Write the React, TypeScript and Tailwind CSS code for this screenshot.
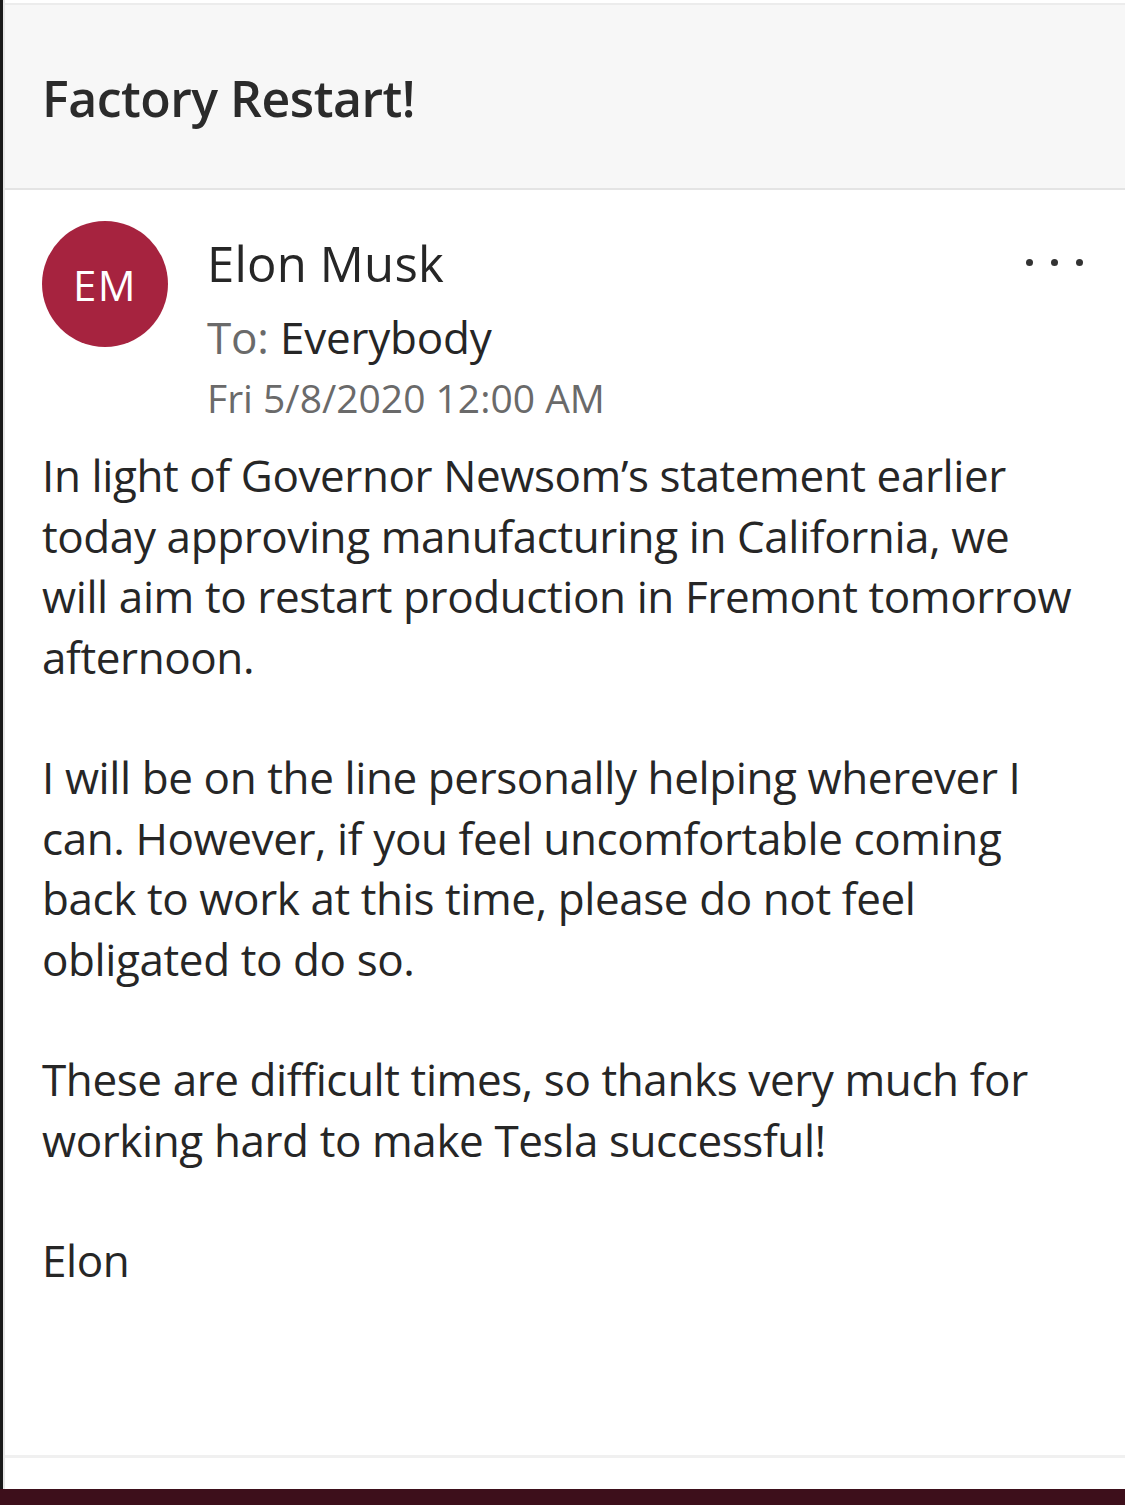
const body: string[][] = [
  [
    'In light of Governor Newsom\u2019s statement earlier',
    'today approving manufacturing in California, we',
    'will aim to restart production in Fremont tomorrow',
    'afternoon.',
  ],
  [
    'I will be on the line personally helping wherever I',
    'can. However, if you feel uncomfortable coming',
    'back to work at this time, please do not feel',
    'obligated to do so.',
  ],
  [
    'These are difficult times, so thanks very much for',
    'working hard to make Tesla successful!',
  ],
  ['Elon'],
];

export default function App() {
  return (
    <div className="flex h-[1505px] w-[1125px] flex-col overflow-hidden bg-white font-['Open_Sans',sans-serif] text-[#262626]">
      <div className="flex flex-1 flex-col border-l-[3px] border-[#1a1a1a]">
        <div className="flex flex-1 flex-col border-l-2 border-[#e6e6e6] pt-[3px]">
          <header className="flex h-[187px] items-center border-y-2 border-t-[#ececec] border-b-[#e4e4e4] bg-[#f7f7f7] pl-[37px]">
            <h1 className="pt-[4px] text-[50px] font-semibold tracking-[-0.5px] text-[#2b2b2b]">Factory Restart!</h1>
          </header>

          <div className="flex flex-1 flex-col border-b-[3px] border-[#f0f0f0] pl-[37px] pr-[40px]">
            <div className="flex items-start pt-[31px]">
              <div className="flex h-[126px] w-[126px] shrink-0 items-center justify-center rounded-full bg-[#a6233f] text-[42px] tracking-[1.5px] text-white">
                EM
              </div>
              <div className="ml-[39px] flex flex-1 flex-col">
                <div className="h-[80px] pt-[12px] text-[49px] leading-[60px] tracking-[0.2px] text-[#262626]">Elon Musk</div>
                <div className="h-[68px] pt-[6px] text-[44px] leading-[60px] tracking-[-0.2px]">
                  <span className="text-[#6a6a6a]">To: </span>
                  <span className="text-[#262626]">Everybody</span>
                </div>
                <div className="text-[39px] leading-[58px] tracking-[0px] text-[#6a6a6a]">Fri 5/8/2020 12:00 AM</div>
              </div>
              <div className="mt-[38px] flex gap-[18px] pr-[2px]">
                <span className="h-[7px] w-[7px] rounded-full bg-[#333]" />
                <span className="h-[7px] w-[7px] rounded-full bg-[#333]" />
                <span className="h-[7px] w-[7px] rounded-full bg-[#333]" />
              </div>
            </div>

            <div className="mt-[18px] flex flex-col gap-[60px] text-[44px] leading-[60.5px] tracking-[-0.4px]">
              {body.map((para, i) => (
                <p key={i} className="whitespace-nowrap">
                  {para.map((line, j) => (
                    <span key={j} className="block">
                      {line}
                    </span>
                  ))}
                </p>
              ))}
            </div>
          </div>
          <div className="h-[31px] bg-white" />
        </div>
      </div>
      <div className="h-[16px] bg-[#3d0f1b]" />
    </div>
  );
}
